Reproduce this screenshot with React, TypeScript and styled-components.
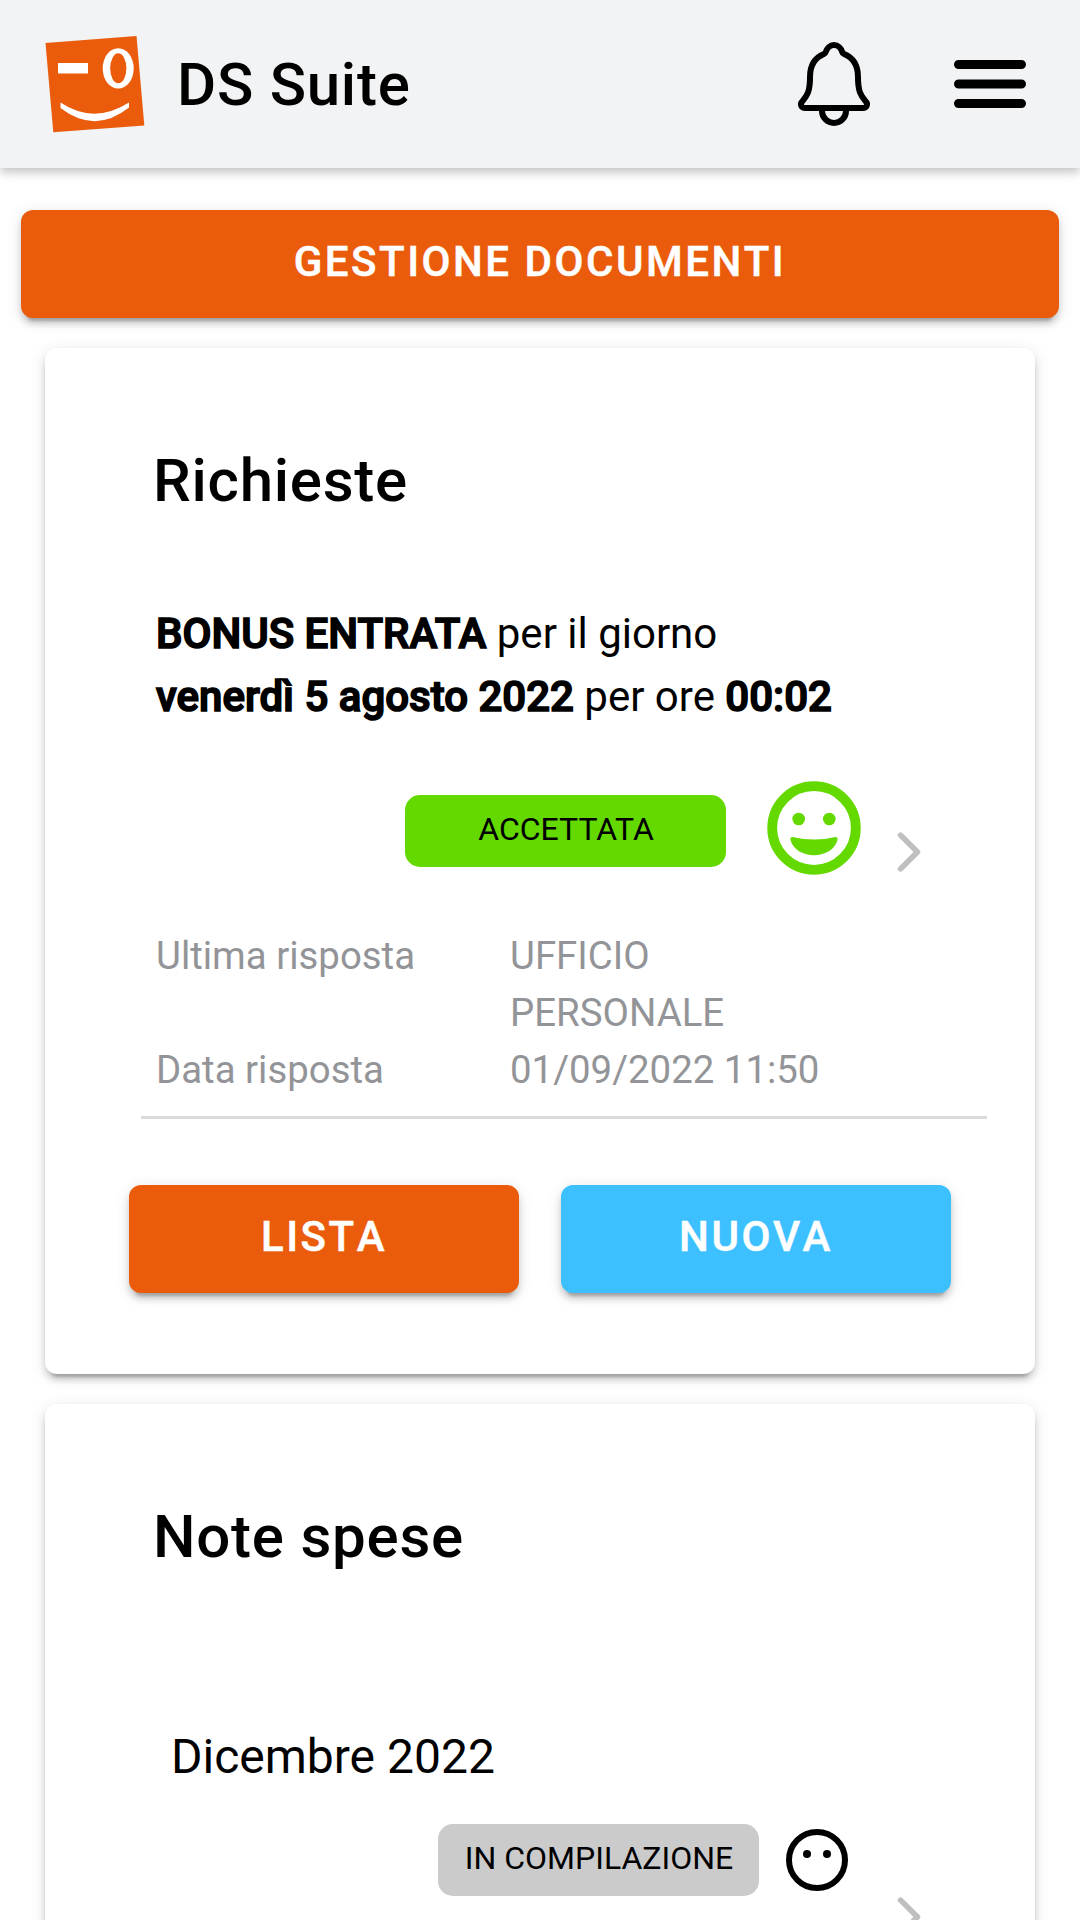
import React from "react";
import styled, { createGlobalStyle } from "styled-components";
import { IoNotificationsOutline } from "react-icons/io5";

const GlobalStyle = createGlobalStyle`
  * { box-sizing: border-box; }
  html, body { margin: 0; background: #fff; }
  body {
    height: 1920px;
    overflow: hidden;
    font-family: Roboto, "Noto Sans", sans-serif;
    color: #000;
    -webkit-font-smoothing: antialiased;
  }
`;

const elevation = `
  0 9px 3px -6px rgba(0, 0, 0, 0.2),
  0 6px 6px 0 rgba(0, 0, 0, 0.14),
  0 3px 15px 0 rgba(0, 0, 0, 0.12)`;

const Screen = styled.div`
  display: flex;
  flex-direction: column;
  width: 1080px;
  height: 1920px;
  overflow: hidden;
`;

const Toolbar = styled.header`
  flex: none;
  display: flex;
  align-items: center;
  height: 168px;
  padding: 0 42px 0 45px;
  background: #f1f3f4;
  box-shadow: 0 4px 10px rgba(0, 0, 0, 0.25);
`;

const ToolbarTitle = styled.h1`
  flex: 1;
  margin: 2px 0 0 32px;
  font-size: 60px;
  font-weight: 500;
  line-height: 72px;
  letter-spacing: 0.0125em;
`;

const IconButton = styled.button`
  display: flex;
  margin: 0 0 0 60px;
  padding: 0;
  border: 0;
  background: none;
  color: #000;
`;

const Content = styled.main`
  display: flex;
  flex-direction: column;
  gap: 30px;
  padding: 42px 21px 0;
`;

const Button = styled.button<{ $tone: string }>`
  flex: none;
  height: 108px;
  padding: 0 0 4px;
  border: 0;
  border-radius: 12px;
  background: ${(p) => p.$tone};
  box-shadow: ${elevation};
  color: #fff;
  font: 500 42px/48px Roboto, "Noto Sans", sans-serif;
  font-kerning: none;
  letter-spacing: 0.06em;
  text-transform: uppercase;
  -webkit-text-stroke: 0.5px #fff;
`;

const Card = styled.section<{ $height: number }>`
  flex: none;
  display: flex;
  flex-direction: column;
  height: ${(p) => p.$height}px;
  margin: 0 24px;
  padding: 97px 48px 0 84px;
  border-radius: 12px;
  background: #fff;
  box-shadow: ${elevation};
`;

const CardTitle = styled.h2`
  margin: 0 0 0 24px;
  font-size: 60px;
  font-weight: 500;
  line-height: 72px;
  letter-spacing: 0.0125em;
`;

const RequestItem = styled.article`
  display: flex;
  flex-direction: column;
  margin: 85px 0 0 12px;
  padding-bottom: 18px;
  border-bottom: 3px solid #dadada;
`;

const Summary = styled.p`
  margin: 0 0 0 15px;
  font-size: 42px;
  line-height: 63px;
  white-space: nowrap;
`;

const Strong = styled.b`
  font-weight: 500;
  -webkit-text-stroke: 1.6px #000;
`;

const StatusRow = styled.div<{ $height: number; $top: number; $indent: number; $gap: number }>`
  display: flex;
  align-items: center;
  height: ${(p) => p.$height}px;
  gap: ${(p) => p.$gap}px;
  margin: ${(p) => p.$top}px 0 0 ${(p) => p.$indent}px;
`;

const Badge = styled.span<{ $tone: string; $drop?: number }>`
  display: flex;
  justify-content: center;
  width: 321px;
  height: 72px;
  margin-top: ${(p) => p.$drop ?? 0}px;
  padding: 15px 0 0 1px;
  border-radius: 15px;
  background: ${(p) => p.$tone};
  font-size: 32px;
  line-height: 38px;
`;

const ChevronSlot = styled.span<{ $left: number; $top: number }>`
  display: flex;
  margin: ${(p) => p.$top}px 0 0 ${(p) => p.$left}px;
`;

const Details = styled.dl`
  display: grid;
  grid-template-columns: 354px 330px;
  margin: 52px 0 0 15px;
  color: #939498;
  font-size: 38.4px;
  line-height: 57px;
`;

const Label = styled.dt`
  margin: 0;
`;

const Value = styled.dd`
  margin: 0;
`;

const Actions = styled.div`
  display: grid;
  grid-template-columns: 1fr 1fr;
  gap: 42px;
  margin: 66px 36px 0 0;
`;

const Month = styled.p`
  margin: 154px 0 0 42px;
  font-size: 48px;
  line-height: 60px;
`;

const Logo = () => (
  <svg width="100" height="97" viewBox="45 36 100 97">
    <path d="M45.5 43 136.5 36 144.3 125.5 53.3 132.3z" fill="#ea5b0c" />
    <path d="M58 63h30v10.5h-30z" fill="#fff" />
    <ellipse cx="118.2" cy="68.4" rx="15.5" ry="20.2" fill="#fff" />
    <ellipse cx="118.3" cy="68.3" rx="8.1" ry="15" fill="#ea5b0c" />
    <path d="M60.500 102.500Q94 124.800 129 102.500V107.500Q95 134.500 60.500 108z" fill="#fff" />
  </svg>
);

const MenuIcon = () => (
  <svg width="96" height="96" viewBox="0 0 512 512">
    <path d="M88 152h336M88 256h336M88 360h336" stroke="#000" strokeWidth="48" strokeLinecap="round" />
  </svg>
);

const Chevron = () => (
  <svg width="60" height="60" viewBox="0 0 512 512">
    <path
      d="M184 112l144 144-144 144"
      fill="none"
      stroke="#bfbfbf"
      strokeWidth="48"
      strokeLinecap="round"
      strokeLinejoin="round"
    />
  </svg>
);

const HappyFace = () => (
  <svg width="94" height="94" viewBox="-47 -47 94 94" fill="#63d900">
    <circle r="41.8" fill="none" stroke="#63d900" strokeWidth="9.8" />
    <circle cx="-15.3" cy="-9" r="6.3" />
    <circle cx="15.3" cy="-9" r="6.3" />
    <path d="M-21.5 9Q0 14 21.5 9Q24 9 23.5 12C21 22 10 27.3 0 27.3S-21 22-23.5 12Q-24 9-21.5 9z" />
  </svg>
);

const NeutralFace = () => (
  <svg width="62" height="62" viewBox="-31 -31 62 62">
    <circle r="28" fill="none" stroke="#000" strokeWidth="6" />
    <circle cx="-10" cy="-6" r="4" />
    <circle cx="10" cy="-6" r="4" />
  </svg>
);

export default function App() {
  return (
    <Screen>
      <GlobalStyle />
      <Toolbar>
        <Logo />
        <ToolbarTitle>DS Suite</ToolbarTitle>
        <IconButton aria-label="Notifiche">
          <IoNotificationsOutline size={96} />
        </IconButton>
        <IconButton aria-label="Menu">
          <MenuIcon />
        </IconButton>
      </Toolbar>

      <Content>
        <Button $tone="#ea5b0c">Gestione documenti</Button>

        <Card $height={1026}>
          <CardTitle>Richieste</CardTitle>
          <RequestItem>
            <Summary>
              <Strong>BONUS ENTRATA</Strong> per il giorno
              <br />
              <Strong>venerdì 5 agosto 2022</Strong> per ore <Strong>00:02</Strong>
            </Summary>
            <StatusRow $height={94} $top={53} $indent={264} $gap={41}>
              <Badge $tone="#63d900" $drop={6}>ACCETTATA</Badge>
              <HappyFace />
              <ChevronSlot $left={-23} $top={48}>
                <Chevron />
              </ChevronSlot>
            </StatusRow>
            <Details>
              <Label>Ultima risposta</Label>
              <Value>UFFICIO PERSONALE</Value>
              <Label>Data risposta</Label>
              <Value>01/09/2022 11:50</Value>
            </Details>
          </RequestItem>
          <Actions>
            <Button $tone="#ea5b0c">Lista</Button>
            <Button $tone="#3dc0ff">Nuova</Button>
          </Actions>
        </Card>

        <Card $height={1026}>
          <CardTitle>Note spese</CardTitle>
          <Month>Dicembre 2022</Month>
          <StatusRow $height={72} $top={37} $indent={309} $gap={27}>
            <Badge $tone="#cbcbcb">IN COMPILAZIONE</Badge>
            <NeutralFace />
            <ChevronSlot $left={4} $top={114}>
              <Chevron />
            </ChevronSlot>
          </StatusRow>
        </Card>
      </Content>
    </Screen>
  );
}
